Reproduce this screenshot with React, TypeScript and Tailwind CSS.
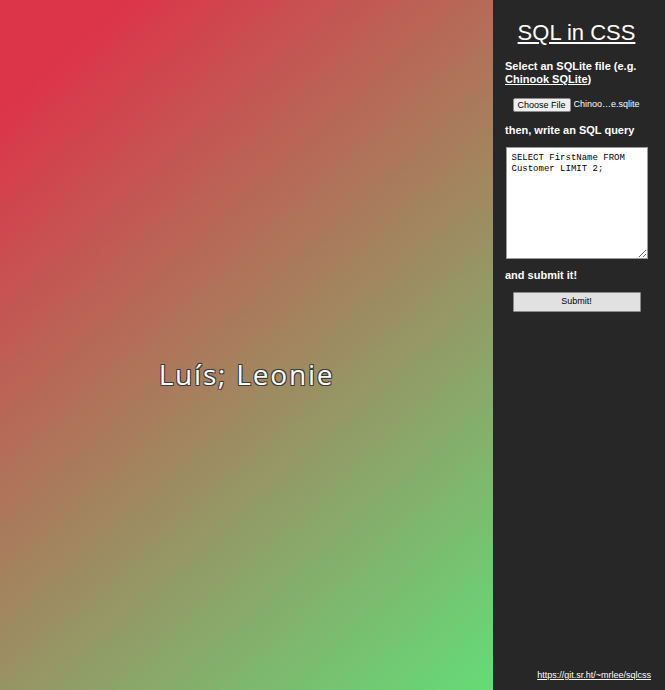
export default function App() {
  return (
    <div className="flex h-[690px] w-[665px] overflow-hidden font-['Liberation_Sans',Arial,sans-serif]">
      {/* result canvas */}
      <main className="flex w-[493px] items-center justify-center bg-[linear-gradient(138deg,#dc3549_10%,#64dc78_100%)] pt-[58px]">
        <p className="font-['Open_Sans',sans-serif] text-[28px] font-normal tracking-[1.8px] text-white [text-shadow:-1px_-1px_0_#3a3a3a,1px_-1px_0_#3a3a3a,-1px_1px_0_#3a3a3a,1px_1px_0_#3a3a3a]">
          Luís; Leonie
        </p>
      </main>

      {/* controls */}
      <aside className="flex w-[172px] flex-col bg-[#272727] pl-[12px] pr-[17px] text-white">
        <h1 className="mt-[20px] text-center text-[22px] leading-[26px] underline underline-offset-2">
          SQL in CSS
        </h1>

        <p className="mt-[14px] text-[11px] font-bold leading-[13px]">
          Select an SQLite file (e.g.{' '}
          <a href="#" className="underline">
            Chinook SQLite
          </a>
          )
        </p>

        <div className="mx-auto mt-[12px] flex w-[128px] items-center gap-[3px] text-[9px]">
          <button className="h-[14px] rounded-[2px] border border-[#8a8a8a] bg-[#efefef] px-[4px] leading-[12px] text-black">
            Choose File
          </button>
          <span className="truncate">Chinoo…e.sqlite</span>
        </div>

        <p className="mt-[12px] text-[11px] font-bold leading-[13px]">then, write an SQL query</p>

        <textarea
          className="mx-auto mt-[10px] h-[112px] w-[142px] resize-y border border-[#9a9a9a] bg-white p-[5px] font-['Liberation_Mono',monospace] text-[9px] leading-[10.5px] text-black outline-none"
          defaultValue={'SELECT FirstName FROM Customer LIMIT 2;'}
        />

        <p className="mt-[10px] text-[11px] font-bold leading-[13px]">and submit it!</p>

        <button className="mx-auto mt-[10px] h-[20px] w-[128px] rounded-[1px] border border-[#8a8a8a] bg-[#e1e1e1] text-[9px] text-black">
          Submit!
        </button>

        <a href="#" className="mt-auto mb-[8px] -mr-[3px] self-end text-[9px] underline">
          https://git.sr.ht/~mrlee/sqlcss
        </a>
      </aside>
    </div>
  );
}
